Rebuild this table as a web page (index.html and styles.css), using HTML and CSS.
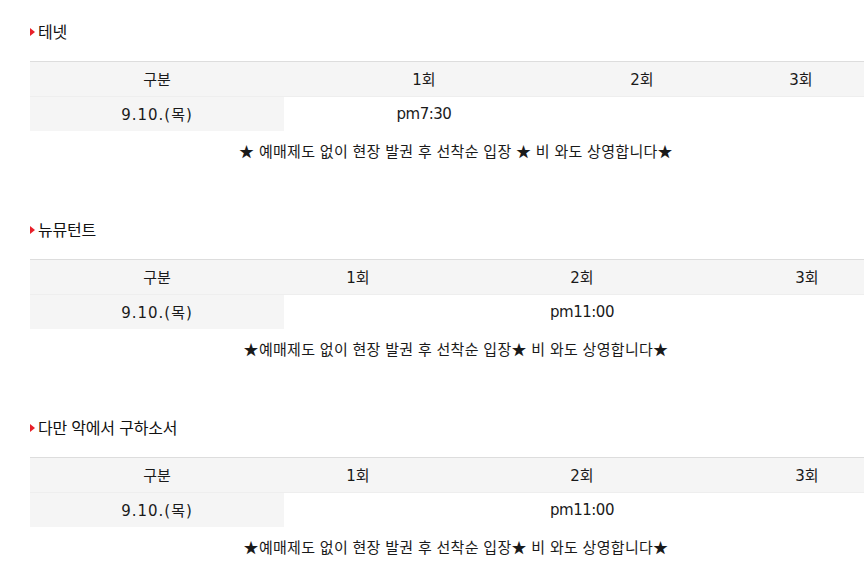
FILE: index.html
```html
<!DOCTYPE html>
<html lang="ko">
<head>
<meta charset="utf-8">
<link rel="stylesheet" href="styles.css">
</head>
<body>
<div class="page">
  <section class="block">
    <h3 class="title"><span class="arrow"></span>테넷</h3>
    <table class="sched">
      <colgroup><col class="c-date"><col style="width:280px"><col style="width:156px"><col style="width:162px"></colgroup>
      <thead><tr><th>구분</th><th>1회</th><th>2회</th><th>3회</th></tr></thead>
      <tbody><tr><td class="date">9.10.(목)</td><td class="time">pm7:30</td><td></td><td></td></tr></tbody>
    </table>
    <p class="notice">★ 예매제도 없이 현장 발권 후 선착순 입장 ★ 비 와도 상영합니다★</p>
  </section>
  <section class="block">
    <h3 class="title"><span class="arrow"></span>뉴뮤턴트</h3>
    <table class="sched">
      <colgroup><col class="c-date"><col style="width:148px"><col style="width:300px"><col style="width:150px"></colgroup>
      <thead><tr><th>구분</th><th>1회</th><th>2회</th><th>3회</th></tr></thead>
      <tbody><tr><td class="date">9.10.(목)</td><td></td><td class="time">pm11:00</td><td></td></tr></tbody>
    </table>
    <p class="notice">★예매제도 없이 현장 발권 후 선착순 입장★ 비 와도 상영합니다★</p>
  </section>
  <section class="block">
    <h3 class="title"><span class="arrow"></span>다만 악에서 구하소서</h3>
    <table class="sched">
      <colgroup><col class="c-date"><col style="width:148px"><col style="width:300px"><col style="width:150px"></colgroup>
      <thead><tr><th>구분</th><th>1회</th><th>2회</th><th>3회</th></tr></thead>
      <tbody><tr><td class="date">9.10.(목)</td><td></td><td class="time">pm11:00</td><td></td></tr></tbody>
    </table>
    <p class="notice">★예매제도 없이 현장 발권 후 선착순 입장★ 비 와도 상영합니다★</p>
  </section>
</div>
</body>
</html>
```
FILE: styles.css
```css
html, body {
  margin: 0;
  padding: 0;
  overflow: hidden;
  background: #fff;
}
body {
  font-family: "DejaVu Sans", "Noto Sans CJK KR", sans-serif;
  font-size: 15px;
  color: #1a1a1a;
}
.page {
  padding: 21px 0 0 30px;
  width: 852px;
}
.block {
  margin-bottom: 58px;
}
.title {
  margin: 0;
  height: 20px;
  line-height: 20px;
  font-size: 16px;
  font-weight: normal;
  letter-spacing: -0.2px;
  color: #111;
  display: flex;
  align-items: center;
  gap: 3px;
  font-family: "Noto Sans CJK KR", sans-serif;
}
.arrow {
  width: 0;
  height: 0;
  border-top: 4px solid transparent;
  border-bottom: 4px solid transparent;
  border-left: 5px solid #e8202a;
  margin-top: 1px;
}
.sched {
  margin-top: 20px;
  width: 852px;
  border-collapse: collapse;
  table-layout: fixed;
  border-top: 1px solid #ddd;
}
.c-date { width: 254px; }
.sched th {
  height: 32px;
  padding: 0 0 2px;
  background: #f5f5f5;
  border-bottom: 1px solid #eee;
  font-weight: normal;
  text-align: center;
}
.sched td {
  height: 33px;
  padding: 0 0 1px;
  text-align: center;
}
.sched td.date {
  background: #f5f5f5;
  letter-spacing: 1px;
}
.sched td.time {
  letter-spacing: -0.5px;
}
.notice {
  margin: 10px 0 0;
  height: 20px;
  line-height: 20px;
  text-align: center;
  width: 852px;
  font-size: 15px;
  letter-spacing: 0.3px;
  font-family: "Noto Sans CJK KR", sans-serif;
}
```
